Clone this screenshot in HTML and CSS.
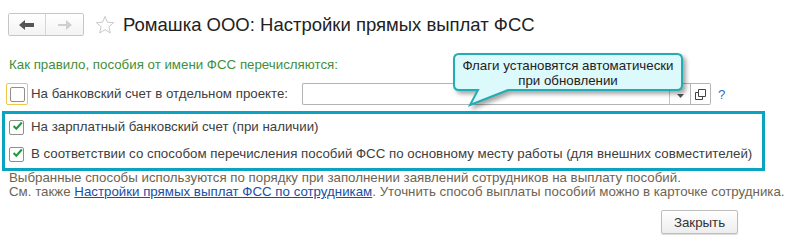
FILE: index.html
```html
<!DOCTYPE html>
<html lang="ru">
<head>
<meta charset="utf-8">
<link rel="stylesheet" href="styles.css">
</head>
<body>
<div class="page">
  <div class="header">
    <div class="nav">
      <button class="nav-btn back" aria-label="Назад">
        <svg width="16" height="10" viewBox="0 0 16 10"><path d="M0 5 L6 0 V3 H15 V7 H6 V10 Z" fill="#555"/></svg>
      </button>
      <button class="nav-btn fwd" aria-label="Вперёд">
        <svg width="14" height="10" viewBox="0 0 14 10"><path d="M14 5 L8 0 V4 H0 V6 H8 V10 Z" fill="#cfcfcf"/></svg>
      </button>
    </div>
    <svg class="star" width="20" height="20" viewBox="0 0 20 20"><path d="M10 1.5 L12.4 7.2 L18.6 7.7 L13.9 11.8 L15.3 17.9 L10 14.7 L4.7 17.9 L6.1 11.8 L1.4 7.7 L7.6 7.2 Z" fill="none" stroke="#c9c9c9" stroke-width="1"/></svg>
    <h1 class="title">Ромашка ООО: Настройки прямых выплат ФСС</h1>
  </div>

  <div class="note">Как правило, пособия от имени ФСС перечисляются:</div>

  <div class="row project-row">
    <span class="focus-ring"><span class="cb"></span></span>
    <span class="label">На банковский счет в отдельном проекте:</span>
    <div class="field">
      <div class="input"></div>
      <div class="drop"><svg width="7" height="4" viewBox="0 0 7 4"><path d="M0 0 H7 L3.5 4 Z" fill="#555"/></svg></div>
      <div class="open"><svg width="11" height="11" viewBox="0 0 11 11"><path d="M3.5 0.5 H10.5 V7.5 H3.5 Z M0.5 3.5 H3.5 M0.5 3.5 V10.5 H7.5 V7.5" fill="none" stroke="#444" stroke-width="1"/></svg></div>
    </div>
    <span class="help">?</span>
  </div>

  <div class="flags">
    <div class="row flag-row">
      <span class="cb checked"><svg width="14" height="12" viewBox="0 0 14 12"><path d="M2 6 L5.5 9.5 L12.5 1.5" fill="none" stroke="#1f9b3a" stroke-width="2.6"/></svg></span>
      <span class="label">На зарплатный банковский счет (при наличии)</span>
    </div>
    <div class="row flag-row">
      <span class="cb checked"><svg width="14" height="12" viewBox="0 0 14 12"><path d="M2 6 L5.5 9.5 L12.5 1.5" fill="none" stroke="#1f9b3a" stroke-width="2.6"/></svg></span>
      <span class="label">В соответствии со способом перечисления пособий ФСС по основному месту работы (для внешних совместителей)</span>
    </div>
  </div>

  <div class="desc">
    <div>Выбранные способы используются по порядку при заполнении заявлений сотрудников на выплату пособий.</div>
    <div>См. также <a href="#" class="link">Настройки прямых выплат ФСС по сотрудникам</a>. Уточнить способ выплаты пособий можно в карточке сотрудника.</div>
  </div>

  <div class="footer">
    <button class="close-btn">Закрыть</button>
  </div>

  <div class="callout">
    <svg class="callout-shape" width="240" height="62" viewBox="0 0 240 62">
      <path d="M9 4 H227 Q232 4 232 9 V35 Q232 40 227 40 H58 L20 55 L28 40 H9 Q4 40 4 35 V9 Q4 4 9 4 Z" fill="#dcf9fc" stroke="#22adb5" stroke-width="2"/>
    </svg>
    <div class="callout-text">Флаги установятся автоматически<br>при обновлении</div>
  </div>
</div>
</body>
</html>
```

FILE: styles.css
```css
* { box-sizing: border-box; }
html, body { margin: 0; padding: 0; background: #fff; }
body {
  font-family: "Liberation Sans", Arial, sans-serif;
  font-size: 13.3px;
  color: #404040;
  width: 795px;
  height: 243px;
  overflow: hidden;
}
.page { position: relative; }

.header {
  display: flex;
  align-items: center;
  padding: 13px 0 0 8px;
  height: 36px;
}
.nav {
  display: flex;
  height: 23px;
  border: 1px solid #c6c6c6;
  border-radius: 2px;
  background: #fff;
}
.nav-btn {
  width: 37px;
  height: 21px;
  border: 0;
  padding: 0;
  margin: 0;
  background: linear-gradient(#fff, #f3f3f3);
  display: flex;
  align-items: center;
  justify-content: center;
}
.nav-btn.back { border-right: 1px solid #d6d6d6; }
.star { margin-left: 11px; margin-top: 1px; }
.title {
  margin: 0 0 0 8px;
  font-weight: normal;
  font-size: 18.5px;
  color: #222;
  line-height: 23px;
}

.note {
  margin: 21px 0 0 9px;
  line-height: 16px;
  color: #3f8f3a;
}

.row { display: flex; align-items: center; }
.project-row {
  margin-top: 10px;
  height: 22px;
  padding-left: 6px;
}
.focus-ring {
  width: 22px;
  height: 22px;
  border: 1px solid #f0c548;
  border-radius: 2px;
  display: flex;
  align-items: center;
  justify-content: center;
  flex: none;
}
.cb {
  width: 15px;
  height: 15px;
  border: 1px solid #8e8e8e;
  border-radius: 2px;
  background: #fff;
  display: flex;
  align-items: center;
  justify-content: center;
  flex: none;
}
.cb.checked svg { margin-left: 2px; margin-top: -2px; }
.label { line-height: 16px; white-space: nowrap; }
.project-row .label { margin-left: 3px; width: 271px; }
.field { display: flex; height: 22px; }
.input {
  width: 367px;
  border: 1px solid #b4b4b4;
  border-right: 0;
  border-radius: 2px 0 0 2px;
}
.drop {
  width: 22px;
  border: 1px solid #b4b4b4;
  border-left: 1px solid #c4c4c4;
  display: flex;
  align-items: flex-end;
  justify-content: center;
  padding-bottom: 6px;
}
.open {
  width: 20px;
  border: 1px solid #b4b4b4;
  border-left: 0;
  border-radius: 0 2px 2px 0;
  display: flex;
  align-items: center;
  justify-content: center;
}
.help {
  margin-left: 7px;
  color: #1f6fc7;
}

.flags {
  margin: 6px 0 0 2px;
  width: 763px;
  border: 3px solid #0aa3c2;
  padding: 3px 0 4px 4px;
  display: flex;
  flex-direction: column;
  gap: 7px;
}
.flag-row { height: 20px; }
.flag-row .label { margin-left: 7px; }

.desc {
  margin-left: 9px;
  line-height: 14px;
  color: #6e6452;
  white-space: nowrap;
}
.link { color: #1b4ea3; text-decoration: underline; }

.footer {
  display: flex;
  justify-content: flex-end;
  padding-right: 57px;
  margin-top: 11px;
}
.close-btn {
  font-family: "Liberation Sans", Arial, sans-serif;
  font-size: 13.3px;
  color: #333;
  width: 77px;
  height: 24px;
  border: 1px solid #bdbdbd;
  border-radius: 2px;
  background: linear-gradient(#ffffff, #ededed);
  box-shadow: 0 1px 1px rgba(0,0,0,0.15);
  padding: 0;
}

.callout {
  position: absolute;
  left: 450px;
  top: 50px;
  width: 240px;
  height: 62px;
}
.callout-shape {
  display: block;
  filter: drop-shadow(3px 3px 2px rgba(0,0,0,0.35));
}
.callout-text {
  position: absolute;
  left: 4px;
  top: 8px;
  width: 228px;
  text-align: center;
  line-height: 15px;
  color: #222;
}
```
